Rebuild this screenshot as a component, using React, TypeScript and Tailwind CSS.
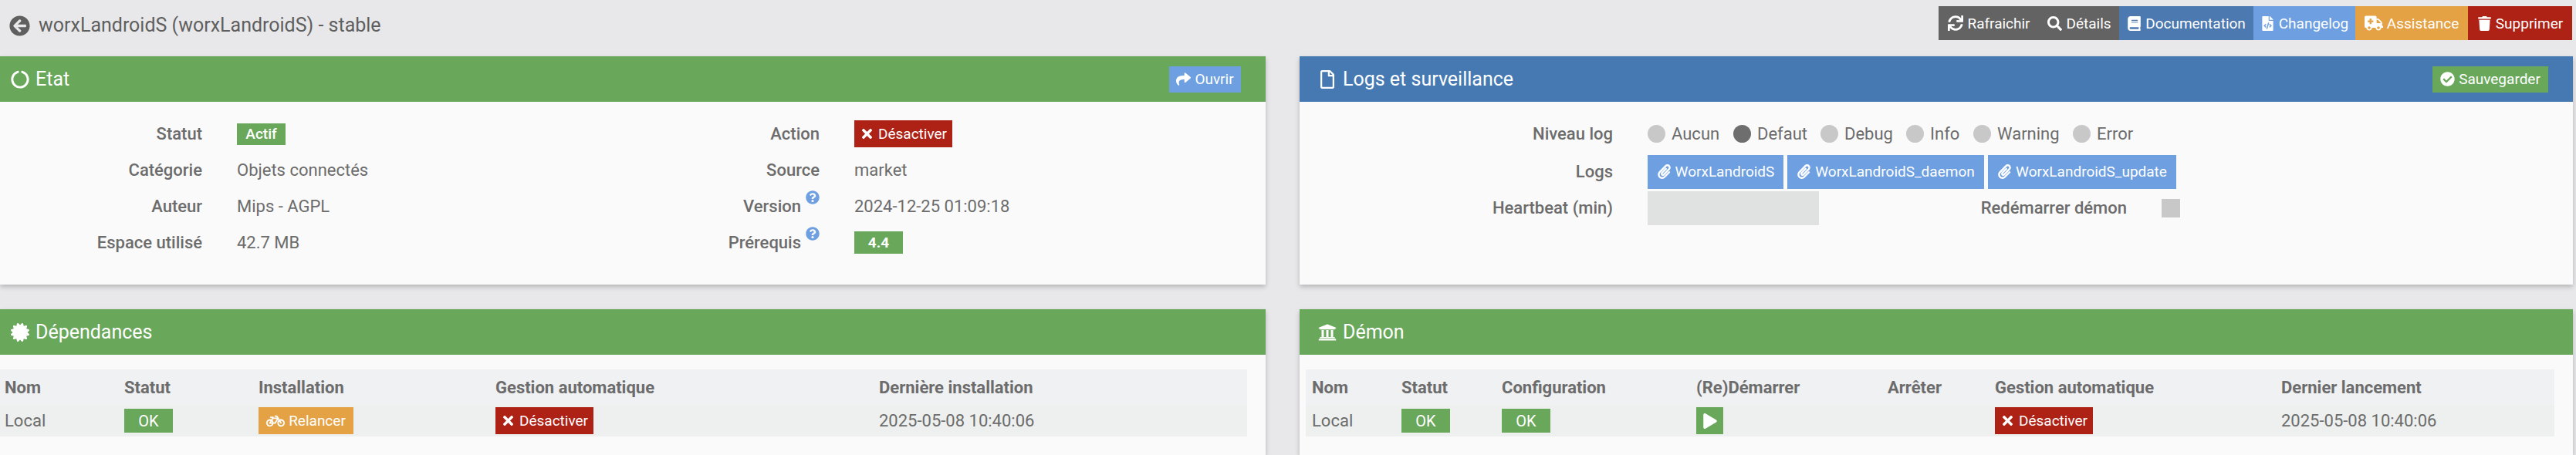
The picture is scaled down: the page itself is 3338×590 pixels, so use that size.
import type { ReactNode } from "react";
import {
  FaAmbulance,
  FaArrowCircleLeft,
  FaBicycle,
  FaBook,
  FaCertificate,
  FaCheckCircle,
  FaCircleNotch,
  FaFileCode,
  FaPaperclip,
  FaPlay,
  FaQuestionCircle,
  FaRegFile,
  FaSearch,
  FaShare,
  FaSync,
  FaTimes,
  FaTrash,
  FaUniversity,
} from "react-icons/fa";

function Panel({
  icon,
  title,
  action,
  color,
  className,
  children,
}: {
  icon: ReactNode;
  title: string;
  action?: ReactNode;
  color: string;
  className?: string;
  children: ReactNode;
}) {
  return (
    <section className={`bg-[#fafafa] shadow-[0_3px_6px_rgba(0,0,0,0.22)] ${className ?? ""}`}>
      <div className={`flex h-[59px] items-center justify-between pr-8 text-white ${color}`}>
        <h3 className="flex items-center gap-2 text-[25px] font-normal">
          {icon}
          {title}
        </h3>
        {action}
      </div>
      {children}
    </section>
  );
}

function Btn({ color, icon, children, className }: { color: string; icon?: ReactNode; children: ReactNode; className?: string }) {
  return (
    <span className={`inline-flex items-center justify-center gap-[5px] text-[19px] text-white ${color} ${className ?? ""}`}>
      {icon}
      {children}
    </span>
  );
}

function Deactivate() {
  return (
    <Btn color="bg-[#ae2115]" icon={<FaTimes className="h-[19px] w-auto" />} className="h-[35px] w-[127px]">
      Désactiver
    </Btn>
  );
}

function Badge({ children }: { children: ReactNode }) {
  return (
    <span className="inline-flex h-[31px] w-[63px] items-center justify-center bg-[#69a75b] text-[20px] text-white">
      {children}
    </span>
  );
}

function Label({ children, help }: { children: ReactNode; help?: boolean }) {
  return (
    <span className={`relative text-right font-medium ${help ? "pr-[24px]" : ""}`}>
      {children}
      {help && <FaQuestionCircle className="absolute -top-[10px] right-0 size-[18px] text-[#6e9fe0]" />}
    </span>
  );
}

function Radio({ label, on, className }: { label: string; on?: boolean; className: string }) {
  return (
    <span className={`flex items-center gap-2 ${className}`}>
      <span className={`size-[23px] rounded-full ${on ? "bg-[#6e6e6e]" : "bg-[#c8c8c8]"}`} />
      {label}
    </span>
  );
}

function LogBtn({ label, className }: { label: string; className: string }) {
  return (
    <Btn color="bg-[#6e9fe0]" icon={<FaPaperclip className="h-[19px] w-auto" />} className={`h-[44px] ${className}`}>
      {label}
    </Btn>
  );
}

function DataTable({
  columns,
  headers,
  cells,
  className,
}: {
  columns: string;
  headers: string[];
  cells: ReactNode[];
  className: string;
}) {
  return (
    <div className={`mt-[19px] ${className}`}>
      <div className={`grid h-[46px] items-center bg-[#f0f1f3] pt-[1px] font-bold ${columns}`}>
        {headers.map((h) => (
          <span key={h}>{h}</span>
        ))}
      </div>
      <div className={`grid h-[41px] items-center bg-[#edf0ee] ${columns}`}>
        {cells.map((c, i) => (
          <span key={i} className="flex items-center">
            {c}
          </span>
        ))}
      </div>
    </div>
  );
}

export default function App() {
  return (
    <div className="h-[590px] w-[3338px] overflow-hidden bg-[#e8e8ea] font-['Roboto',sans-serif] text-[22px] leading-none text-[#6c6c6c]">
      <header className="flex h-[73px]">
        <h1 className="flex items-start gap-[11px] pl-3 pt-[20px] text-[25px] font-normal text-[#5f5f5f]">
          <FaArrowCircleLeft className="size-[27px]" />
          worxLandroidS (worxLandroidS) - stable
        </h1>
        <div className="ml-auto mr-[5px] mt-2 flex h-[44px]">
          <Btn color="bg-[#636363]" icon={<FaSync className="size-[20px]" />} className="w-[131px]">Rafraichir</Btn>
          <Btn color="bg-[#636363]" icon={<FaSearch className="size-[19px]" />} className="w-[103px]">Détails</Btn>
          <Btn color="bg-[#4c79b0]" icon={<FaBook className="h-[19px] w-auto" />} className="w-[174px]">Documentation</Btn>
          <Btn color="bg-[#6e9fe0]" icon={<FaFileCode className="h-[19px] w-auto" />} className="w-[132px]">Changelog</Btn>
          <Btn color="bg-[#e4a245]" icon={<FaAmbulance className="size-[24px]" />} className="w-[146px]">Assistance</Btn>
          <Btn color="bg-[#ae2115]" icon={<FaTrash className="h-[19px] w-auto" />} className="w-[135px]">Supprimer</Btn>
        </div>
      </header>

      <main className="grid grid-cols-[1640px_1650px] grid-rows-[296px_1fr] gap-x-[44px] gap-y-[32px]">
        <Panel
          color="bg-[#69a75b] pl-[14px]"
          icon={<FaCircleNotch className="size-[24px]" />}
          title="Etat"
          action={
            <Btn color="bg-[#6e9fe0]" icon={<FaShare className="size-[19px]" />} className="h-[34px] w-[93px]">
              Ouvrir
            </Btn>
          }
        >
          <div className="grid grid-cols-[262px_448px_262px_1fr] grid-rows-[repeat(4,47px)] items-center gap-x-[45px] pt-[18px]">
            <Label>Statut</Label>
            <span>
              <span className="inline-flex h-[28px] w-[63px] items-center justify-center bg-[#69a75b] text-[19px] font-medium text-white">Actif</span>
            </span>
            <Label>Action</Label>
            <span><Deactivate /></span>
            <Label>Catégorie</Label>
            <span>Objets connectés</span>
            <Label>Source</Label>
            <span>market</span>
            <Label>Auteur</Label>
            <span>Mips - AGPL</span>
            <Label help>Version</Label>
            <span>2024-12-25 01:09:18</span>
            <Label>Espace utilisé</Label>
            <span>42.7 MB</span>
            <Label help>Prérequis</Label>
            <span>
              <span className="inline-flex h-[29px] w-[63px] items-center justify-center bg-[#69a75b] text-[19px] font-bold text-white">4.4</span>
            </span>
          </div>
        </Panel>

        <Panel
          color="bg-[#4679b2] pl-6"
          icon={<FaRegFile className="h-[24px] w-auto" />}
          title="Logs et surveillance"
          action={
            <Btn color="bg-[#69a75b]" icon={<FaCheckCircle className="size-[19px]" />} className="h-[34px] w-[150px]">
              Sauvegarder
            </Btn>
          }
        >
          <div className="grid grid-cols-[406px_222px_354px_1fr] grid-rows-[47px_44px_44px] items-center gap-x-[45px] gap-y-[3.5px] pt-[18px]">
            <Label>Niveau log</Label>
            <div className="col-span-3 flex">
              <Radio label="Aucun" className="w-[111px]" />
              <Radio label="Defaut" on className="w-[113px]" />
              <Radio label="Debug" className="w-[111px]" />
              <Radio label="Info" className="w-[87px]" />
              <Radio label="Warning" className="w-[129px]" />
              <Radio label="Error" className="w-[90px]" />
            </div>
            <Label>Logs</Label>
            <div className="col-span-3 flex gap-[5px]">
              <LogBtn label="WorxLandroidS" className="w-[176px]" />
              <LogBtn label="WorxLandroidS_daemon" className="w-[255px]" />
              <LogBtn label="WorxLandroidS_update" className="w-[244px]" />
            </div>
            <Label>Heartbeat (min)</Label>
            <span className="h-[44px] bg-[#e0e2e1]" />
            <Label>Redémarrer démon</Label>
            <span className="size-[24px] bg-[#c8c8c8]" />
          </div>
        </Panel>

        <Panel color="bg-[#69a75b] pl-[14px]" icon={<FaCertificate className="size-[24px]" />} title="Dépendances" className="h-[189px]">
          <DataTable
            className="mr-[24px]"
            columns="grid-cols-[155px_174px_307px_497px_1fr] pl-[6px]"
            headers={["Nom", "Statut", "Installation", "Gestion automatique", "Dernière installation"]}
            cells={[
              "Local",
              <Badge>OK</Badge>,
              <Btn color="bg-[#e4a245]" icon={<FaBicycle className="size-[24px]" />} className="h-[35px] w-[123px]">
                Relancer
              </Btn>,
              <Deactivate />,
              "2025-05-08 10:40:06",
            ]}
          />
        </Panel>

        <Panel color="bg-[#69a75b] pl-6" icon={<FaUniversity className="size-[24px]" />} title="Démon" className="h-[189px]">
          <DataTable
            className="ml-2 mr-6"
            columns="grid-cols-[116px_130px_252px_248px_139px_371px_1fr] pl-2"
            headers={["Nom", "Statut", "Configuration", "(Re)Démarrer", "Arrêter", "Gestion automatique", "Dernier lancement"]}
            cells={[
              "Local",
              <Badge>OK</Badge>,
              <Badge>OK</Badge>,
              <span className="inline-flex h-[35px] w-[35px] items-center justify-center bg-[#69a75b] text-white">
                <FaPlay className="h-[20px] w-auto" />
              </span>,
              "",
              <Deactivate />,
              "2025-05-08 10:40:06",
            ]}
          />
        </Panel>
      </main>
    </div>
  );
}
